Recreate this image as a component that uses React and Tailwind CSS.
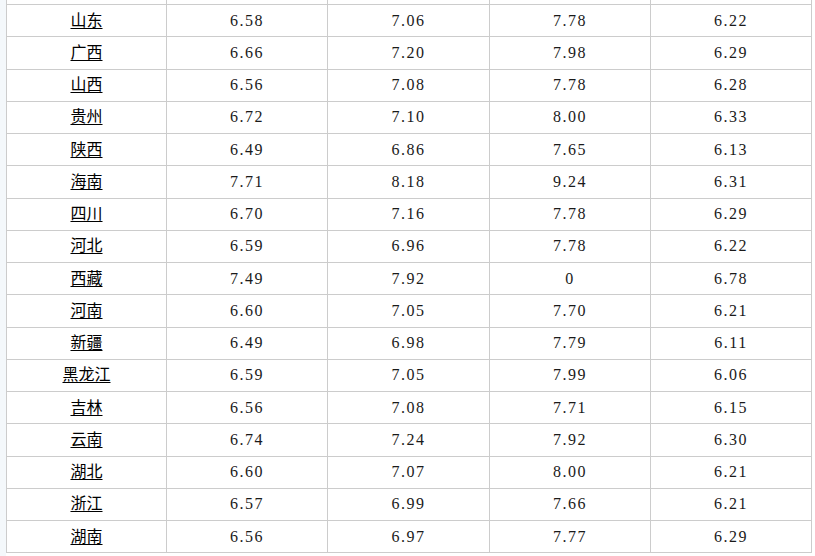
const rows = [
  ["山东", "6.58", "7.06", "7.78", "6.22"],
  ["广西", "6.66", "7.20", "7.98", "6.29"],
  ["山西", "6.56", "7.08", "7.78", "6.28"],
  ["贵州", "6.72", "7.10", "8.00", "6.33"],
  ["陕西", "6.49", "6.86", "7.65", "6.13"],
  ["海南", "7.71", "8.18", "9.24", "6.31"],
  ["四川", "6.70", "7.16", "7.78", "6.29"],
  ["河北", "6.59", "6.96", "7.78", "6.22"],
  ["西藏", "7.49", "7.92", "0", "6.78"],
  ["河南", "6.60", "7.05", "7.70", "6.21"],
  ["新疆", "6.49", "6.98", "7.79", "6.11"],
  ["黑龙江", "6.59", "7.05", "7.99", "6.06"],
  ["吉林", "6.56", "7.08", "7.71", "6.15"],
  ["云南", "6.74", "7.24", "7.92", "6.30"],
  ["湖北", "6.60", "7.07", "8.00", "6.21"],
  ["浙江", "6.57", "6.99", "7.66", "6.21"],
  ["湖南", "6.56", "6.97", "7.77", "6.29"],
];

export default function App() {
  return (
    <div className="w-[815px] h-[556px] overflow-hidden bg-[#f4f8fb] pl-[6px] flex">
      <div className="flex-1 bg-white">
        <div className="w-[806px] border-l border-[#cccccc] grid grid-cols-[160px_161px_162px_161px_161px] grid-rows-[5px_repeat(17,32.25px)]">
          {[0, 1, 2, 3, 4].map((i) => (
            <div key={"top" + i} className="border-r border-b border-[#cccccc]" />
          ))}
          {rows.map((r) =>
            r.map((cell, i) =>
              i === 0 ? (
                <div
                  key={r[0] + i}
                  className="border-r border-b border-[#cccccc] flex items-center justify-center pb-[4px]"
                >
                  <a
                    href="#"
                    className="text-[16px] leading-none text-black underline underline-offset-[2px] font-['Noto_Sans_CJK_SC',sans-serif]"
                  >
                    {cell}
                  </a>
                </div>
              ) : (
                <div
                  key={r[0] + i}
                  className="border-r border-b border-[#cccccc] flex items-center justify-center text-[16px] leading-none text-[#1a1a1a] tracking-[1.5px] font-['Liberation_Serif',serif]"
                >
                  {cell}
                </div>
              )
            )
          )}
        </div>
      </div>
    </div>
  );
}
